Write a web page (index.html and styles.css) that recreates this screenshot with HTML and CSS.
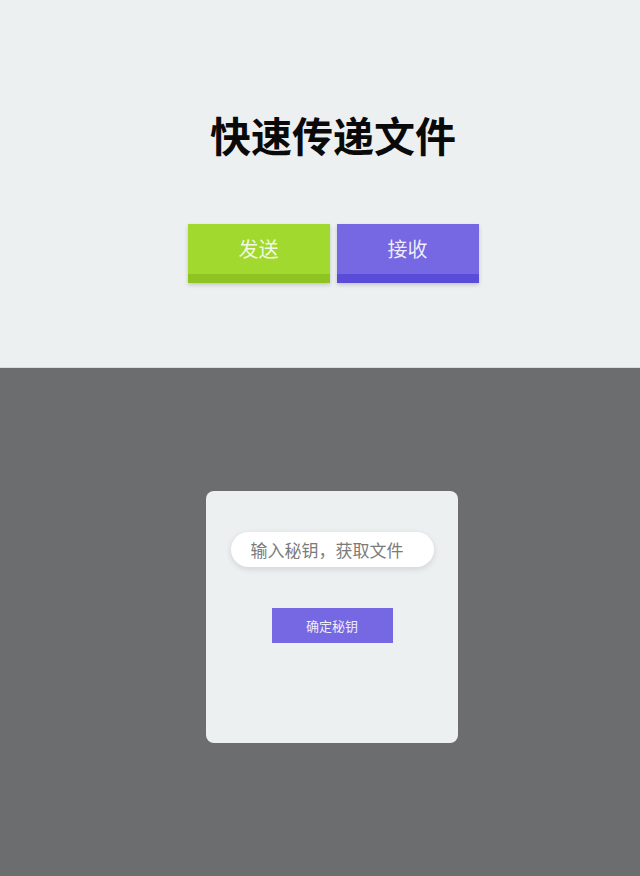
FILE: index.html
```html
<!DOCTYPE html>
<html lang="zh">
<head>
<meta charset="utf-8">
<title>快速传递文件</title>
<link rel="stylesheet" href="styles.css">
</head>
<body>
<section class="top">
  <h1 class="title">快速传递文件</h1>
  <div class="actions">
    <button class="btn btn-send">发送</button>
    <button class="btn btn-recv">接收</button>
  </div>
</section>
<section class="bottom">
  <div class="card">
    <input class="key-input" type="text" placeholder="输入秘钥，获取文件">
    <button class="confirm">确定秘钥</button>
  </div>
</section>
</body>
</html>
```
FILE: styles.css
```css
html, body {
  margin: 0;
  padding: 0;
}
body {
  width: 640px;
  height: 876px;
  overflow: hidden;
  font-family: "Noto Sans CJK SC", "Noto Sans", sans-serif;
  background: #6b6d6f;
}
.top {
  height: 368px;
  background: #ecf0f1;
  display: flex;
  flex-direction: column;
  align-items: center;
  box-sizing: border-box;
  padding-top: 110px;
  padding-left: 26px;
  border-bottom: 1px solid #d9dcdd;
}
.title {
  margin: 0;
  font-size: 41px;
  line-height: 48px;
  font-weight: 700;
  color: #0a0a0a;
}
.actions {
  margin-top: 66px;
  display: flex;
  gap: 7px;
}
.btn {
  width: 142px;
  height: 59px;
  border: none;
  padding: 0 0 9px 0;
  box-sizing: border-box;
  font-family: inherit;
  font-size: 20px;
  line-height: 50px;
  color: rgba(255, 255, 255, 0.88);
}
.btn-send {
  background: #a2d92e;
  box-shadow: inset 0 -9px 0 #8ec321, 0 2px 4px rgba(0, 0, 0, 0.18);
}
.btn-recv {
  background: #7667e3;
  box-shadow: inset 0 -9px 0 #5a4bd8, 0 2px 4px rgba(0, 0, 0, 0.18);
}
.bottom {
  display: flex;
  justify-content: center;
  padding-top: 123px;
  padding-left: 24px;
}
.card {
  width: 252px;
  height: 252px;
  box-sizing: border-box;
  background: #ecf0f1;
  border-radius: 8px;
  display: flex;
  flex-direction: column;
  align-items: center;
  padding-top: 41px;
}
.key-input {
  width: 203px;
  height: 35px;
  box-sizing: border-box;
  border: none;
  border-radius: 18px;
  background: #ffffff;
  box-shadow: 0 2px 6px rgba(0, 0, 0, 0.12);
  padding: 0 0 0 20px;
  font-family: inherit;
  font-size: 17px;
  color: #333;
  outline: none;
}
.key-input::placeholder {
  color: #7b7b7b;
}
.confirm {
  margin-top: 41px;
  width: 121px;
  height: 35px;
  border: none;
  background: #7667e3;
  color: rgba(255, 255, 255, 0.9);
  font-family: inherit;
  font-size: 13px;
  padding: 0;
}
```
